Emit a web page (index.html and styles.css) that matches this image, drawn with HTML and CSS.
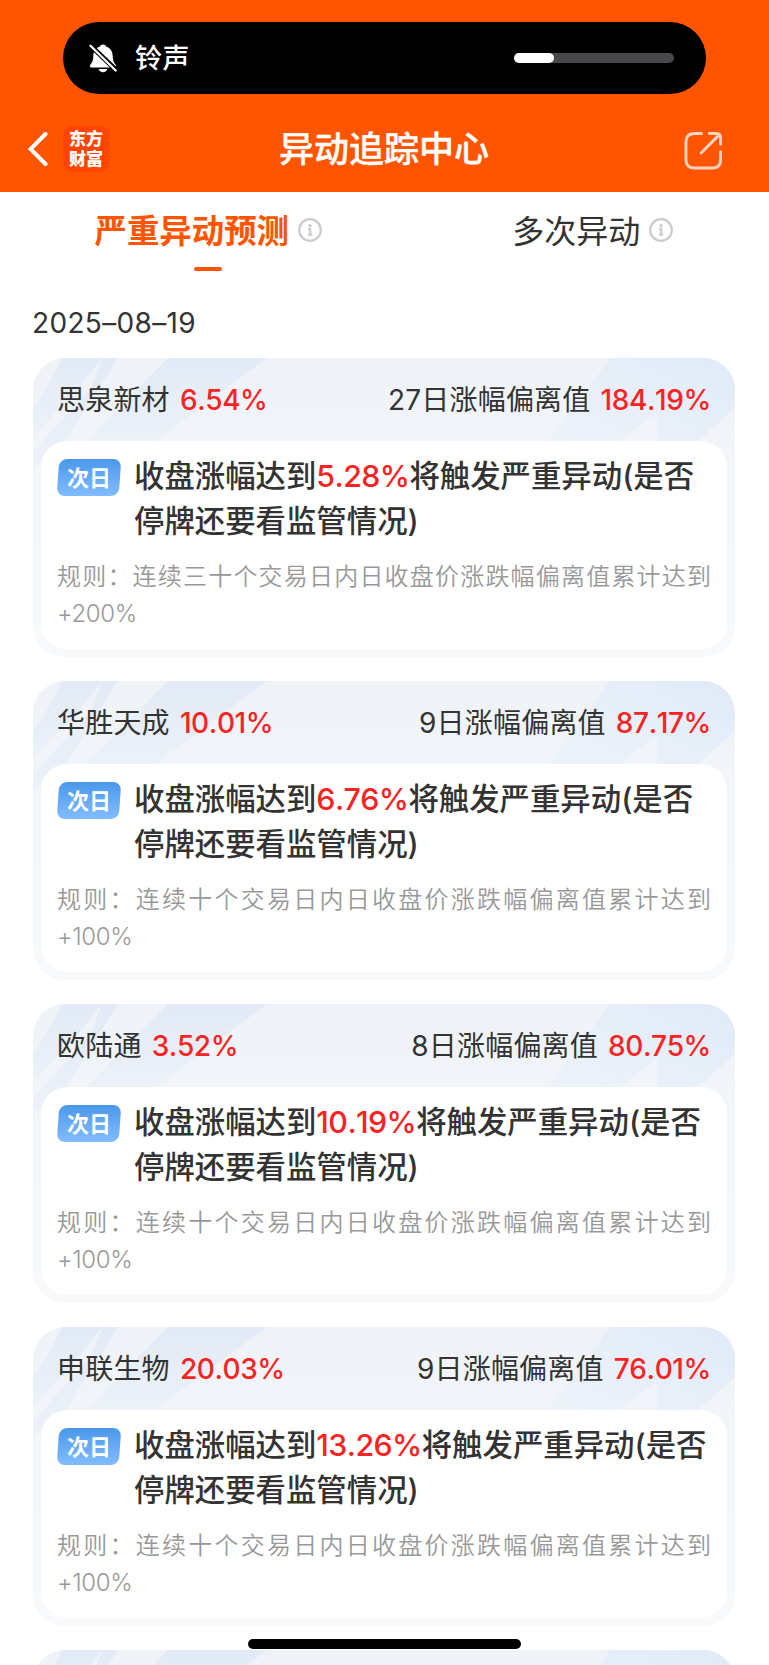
FILE: index.html
```
<!DOCTYPE html>
<html lang="zh-CN">
<head>
    <meta charset="UTF-8">
    <title>异动追踪中心</title>
    <link rel="stylesheet" href="styles.css">
</head>
<body>
    <svg class="defs" aria-hidden="true">
        <defs>
            <linearGradient id="left-fade" x1="0" y1="0" x2="0" y2="1">
                <stop offset="0" stop-color="#e1eaf6"/>
                <stop offset="1" stop-color="#edf2f9"/>
            </linearGradient>
            <linearGradient id="right-fade" x1="0" y1="1" x2="1" y2="0">
                <stop offset="0" stop-color="#eef3f9"/>
                <stop offset="1" stop-color="#e0ebf8"/>
            </linearGradient>
        </defs>
        <symbol id="card-bg" viewBox="0 0 702 110">
            <path fill="url(#left-fade)" d="M29 0H69L47 28 0 79V50Q16 28 29 0Z"/>
            <path fill="url(#left-fade)" d="M69 0H85L33 83 0 110V94L10 83 58 30Z"/>
            <path fill="url(#left-fade)" d="M135 0H234L118 86H50Z"/>
            <path fill="url(#right-fade)" d="M577 0H702V50L655 92H624V54L575 92H508L559 25Z"/>
        </symbol>
        <symbol id="info" viewBox="0 0 24 24">
            <circle cx="12" cy="12" r="10.8" fill="none" stroke="#ccc" stroke-width="2.2"/>
            <circle cx="12" cy="7.8" r="1.7" fill="#ccc"/>
            <path d="M10 11.2h2.300v5.500M10 16.700h4.300" fill="none" stroke="#ccc" stroke-width="2.2"/>
        </symbol>
    </svg>

    <div class="header">
        <div class="island">
            <svg class="bell" viewBox="0 0 28 30">
                <path fill="#fff" d="M14 1.5c1.9 0 3 1 3.3 2.3 4.200 1.300 6.200 4.700 6.400 9 .2 5 1.100 6.700 3 9 .9 1.200.5 2.700-1.200 2.700H2.500c-1.700 0-2.100-1.500-1.200-2.700 1.900-2.300 2.800-4 3-9 .2-4.300 2.200-7.700 6.400-9C11 2.500 12.100 1.500 14 1.500zM9.600 26h8.800c-.5 2-2.200 3.200-4.400 3.200S10.100 28 9.600 26z"/>
                <path stroke="#000" stroke-width="5" d="M1 2 28 28"/>
                <path stroke="#fff" stroke-width="2.3" stroke-linecap="round" d="M1.500 2.700 26.700 27.500"/>
            </svg>
            <span class="ring-text">铃声</span>
            <div class="volume"><div class="volume-value"></div></div>
        </div>
        <div class="navbar">
            <div class="nav-left">
                <svg class="back" viewBox="0 0 20 34"><path d="M17.500 2 2.500 17 17.500 32" fill="none" stroke="#fff" stroke-width="4" stroke-linecap="round"/></svg>
                <div class="logo">东方<br>财富</div>
            </div>
            <div class="title">异动追踪中心</div>
            <svg class="share" viewBox="0 0 40 40">
                <path d="M18 2.500H11Q2 2.500 2 11V29.500Q2 38 11 38H29Q37.500 38 37.500 29.500V21.500M26 2.500H33Q37.500 2.500 37.500 7V13.500M36 4 17.500 22.500" fill="none" stroke="#ffd5c0" stroke-width="3" stroke-linecap="round"/>
            </svg>
        </div>
    </div>

    <div class="tabs">
        <div class="tab active">
            <div class="tab-label"><span>严重异动预测</span><svg class="info"><use href="#info"/></svg></div>
            <div class="tab-line"></div>
        </div>
        <div class="tab">
            <div class="tab-label"><span>多次异动</span><svg class="info"><use href="#info"/></svg></div>
        </div>
    </div>

    <div class="date">2025–08–19</div>

    <div class="list">
        <div class="card">
            <svg class="card-bg"><use href="#card-bg"/></svg>
            <div class="card-head">
                <div>思泉新材 <span class="num">6.54%</span></div>
                <div>27日涨幅偏离值 <span class="num">184.19%</span></div>
            </div>
            <div class="card-body">
                <div class="notice">
                    <div class="tag"><span>次日</span></div>
                    <div class="notice-text">收盘涨幅达到<span class="num">5.28%</span>将触发严重异动(是否<br>停牌还要看监管情况)</div>
                </div>
                <div class="rule">规则：连续三十个交易日内日收盘价涨跌幅偏离值累计达到 <span class="limit">+200%</span></div>
            </div>
        </div>

        <div class="card">
            <svg class="card-bg"><use href="#card-bg"/></svg>
            <div class="card-head">
                <div>华胜天成 <span class="num">10.01%</span></div>
                <div>9日涨幅偏离值 <span class="num">87.17%</span></div>
            </div>
            <div class="card-body">
                <div class="notice">
                    <div class="tag"><span>次日</span></div>
                    <div class="notice-text">收盘涨幅达到<span class="num">6.76%</span>将触发严重异动(是否<br>停牌还要看监管情况)</div>
                </div>
                <div class="rule">规则：连续十个交易日内日收盘价涨跌幅偏离值累计达到 <span class="limit">+100%</span></div>
            </div>
        </div>

        <div class="card">
            <svg class="card-bg"><use href="#card-bg"/></svg>
            <div class="card-head">
                <div>欧陆通 <span class="num">3.52%</span></div>
                <div>8日涨幅偏离值 <span class="num">80.75%</span></div>
            </div>
            <div class="card-body">
                <div class="notice">
                    <div class="tag"><span>次日</span></div>
                    <div class="notice-text">收盘涨幅达到<span class="num">10.19%</span>将触发严重异动(是否<br>停牌还要看监管情况)</div>
                </div>
                <div class="rule">规则：连续十个交易日内日收盘价涨跌幅偏离值累计达到 <span class="limit">+100%</span></div>
            </div>
        </div>

        <div class="card">
            <svg class="card-bg"><use href="#card-bg"/></svg>
            <div class="card-head">
                <div>申联生物 <span class="num">20.03%</span></div>
                <div>9日涨幅偏离值 <span class="num">76.01%</span></div>
            </div>
            <div class="card-body">
                <div class="notice">
                    <div class="tag"><span>次日</span></div>
                    <div class="notice-text">收盘涨幅达到<span class="num">13.26%</span>将触发严重异动(是否<br>停牌还要看监管情况)</div>
                </div>
                <div class="rule">规则：连续十个交易日内日收盘价涨跌幅偏离值累计达到 <span class="limit">+100%</span></div>
            </div>
        </div>

        <div class="card-next">
            <div class="card">
                <svg class="card-bg"><use href="#card-bg"/></svg>
            </div>
        </div>
    </div>

    <div class="home-bar"></div>
</body>
</html>
```

FILE: styles.css
```
* {
    box-sizing: border-box;
}

body {
    margin: 0;
    height: 1665px;
    overflow: hidden;
    position: relative;
    background-color: #fff;
    color: #333;
    font-family: Inter, "Noto Sans CJK SC", sans-serif;
    font-size: 28px;
}

.defs {
    position: absolute;
    width: 0;
    height: 0;
}

/* header */
.header {
    height: 192px;
    padding-top: 22px;
    background-color: #ff5500;
    color: #fff;
}

.island {
    display: flex;
    align-items: center;
    width: 643px;
    height: 72px;
    margin: 0 auto 0 63px;
    padding: 0 32px 0 26px;
    border-radius: 36px;
    background-color: #000;
}

.bell {
    width: 28px;
    height: 30px;
}

.ring-text {
    margin: 2px 0 0 18px;
    font-size: 27px;
    font-weight: 500;
    line-height: 40px;
    letter-spacing: 0.5px;
}

.volume {
    width: 160px;
    height: 10px;
    margin-left: auto;
    border-radius: 5px;
    background-color: #48474c;
}

.volume-value {
    width: 40px;
    height: 10px;
    border-radius: 5px;
    background-color: #fff;
}

.navbar {
    display: flex;
    align-items: center;
    justify-content: space-between;
    height: 98px;
    padding: 12px 46px 0 28px;
}

.nav-left {
    display: flex;
    align-items: center;
    width: 100px;
}

.back {
    width: 20px;
    height: 34px;
}

.logo {
    width: 46px;
    height: 46px;
    margin-left: 15px;
    padding-top: 3px;
    border-radius: 10px;
    background-color: #ff4400;
    font-size: 17px;
    font-weight: 900;
    line-height: 20px;
    text-align: center;
}

.title {
    font-size: 35px;
    font-weight: 500;
    line-height: 50px;
    margin-right: 44px;
    -webkit-text-stroke: 0.4px #fff;
}

.share {
    width: 39px;
    height: 39px;
    margin-top: 3px;
}

/* tabs */
.tabs {
    display: flex;
    height: 96px;
    padding-top: 17px;
}

.tab {
    display: flex;
    flex: 1 1 32px;
    flex-direction: column;
    align-items: center;
    padding-left: 32px;
}

.tab.active {
    color: #ff5500;
}

.active .tab-label {
    font-size: 32.4px;
    font-weight: 700;
}

.tab-label {
    display: flex;
    align-items: center;
    font-size: 32px;
    line-height: 46px;
}

.info {
    width: 24px;
    height: 24px;
    margin: 0 0 4px 9px;
}

.tab-line {
    width: 28px;
    height: 4px;
    margin-top: 12px;
    border-radius: 2px;
    background-color: #ff5500;
}

.date {
    height: 70px;
    padding-left: 32px;
    line-height: 70px;
    letter-spacing: 0.35px;
}

/* cards */
.list {
    padding: 0 34px 0 33px;
}

.card {
    position: relative;
    height: 299px;
    margin-bottom: 24px;
    padding: 0 8px 8px;
    border-radius: 32px;
    background: linear-gradient(#eff3f8, #f7f9fb);
    overflow: hidden;
}

.card-next {
    height: 15px;
    overflow: hidden;
}

.card-bg {
    position: absolute;
    top: 0;
    left: 0;
    width: 702px;
    height: 110px;
}

.card-head {
    position: relative;
    display: flex;
    align-items: center;
    justify-content: space-between;
    height: 83px;
    padding: 0 16px 3px 16px;
    letter-spacing: 0.2px;
    word-spacing: 2px;
}

.num {
    color: #fa2323;
    font-weight: 500;
    font-kerning: none;
    letter-spacing: -0.4px;
}

.notice-text .num {
    letter-spacing: -0.6px;
}

.card-body {
    position: relative;
    height: 208px;
    padding: 13px 16px;
    border-radius: 26px;
    background-color: #fff;
}

.notice {
    display: flex;
}

.tag {
    width: 62px;
    height: 37px;
    margin: 5px 14px 0 1px;
    border-radius: 8px;
    background: linear-gradient(#4a98ea, #82bcff);
    color: #fff;
    font-size: 22px;
    font-weight: 700;
    line-height: 38px;
    text-align: center;
    transform: skewX(-4deg);
}

.tag span {
    display: inline-block;
    transform: skewX(4deg);
}

.notice-text {
    font-size: 30.4px;
    font-weight: 500;
    line-height: 45px;
    white-space: nowrap;
}

.rule {
    margin-top: 14px;
    color: #999;
    font-size: 24px;
    font-weight: 350;
    line-height: 37px;
    text-align: justify;
}

.limit {
    letter-spacing: -0.4px;
}

.home-bar {
    position: absolute;
    left: 248px;
    top: 1639px;
    width: 273px;
    height: 10px;
    border-radius: 5px;
    background-color: #000;
}
```
